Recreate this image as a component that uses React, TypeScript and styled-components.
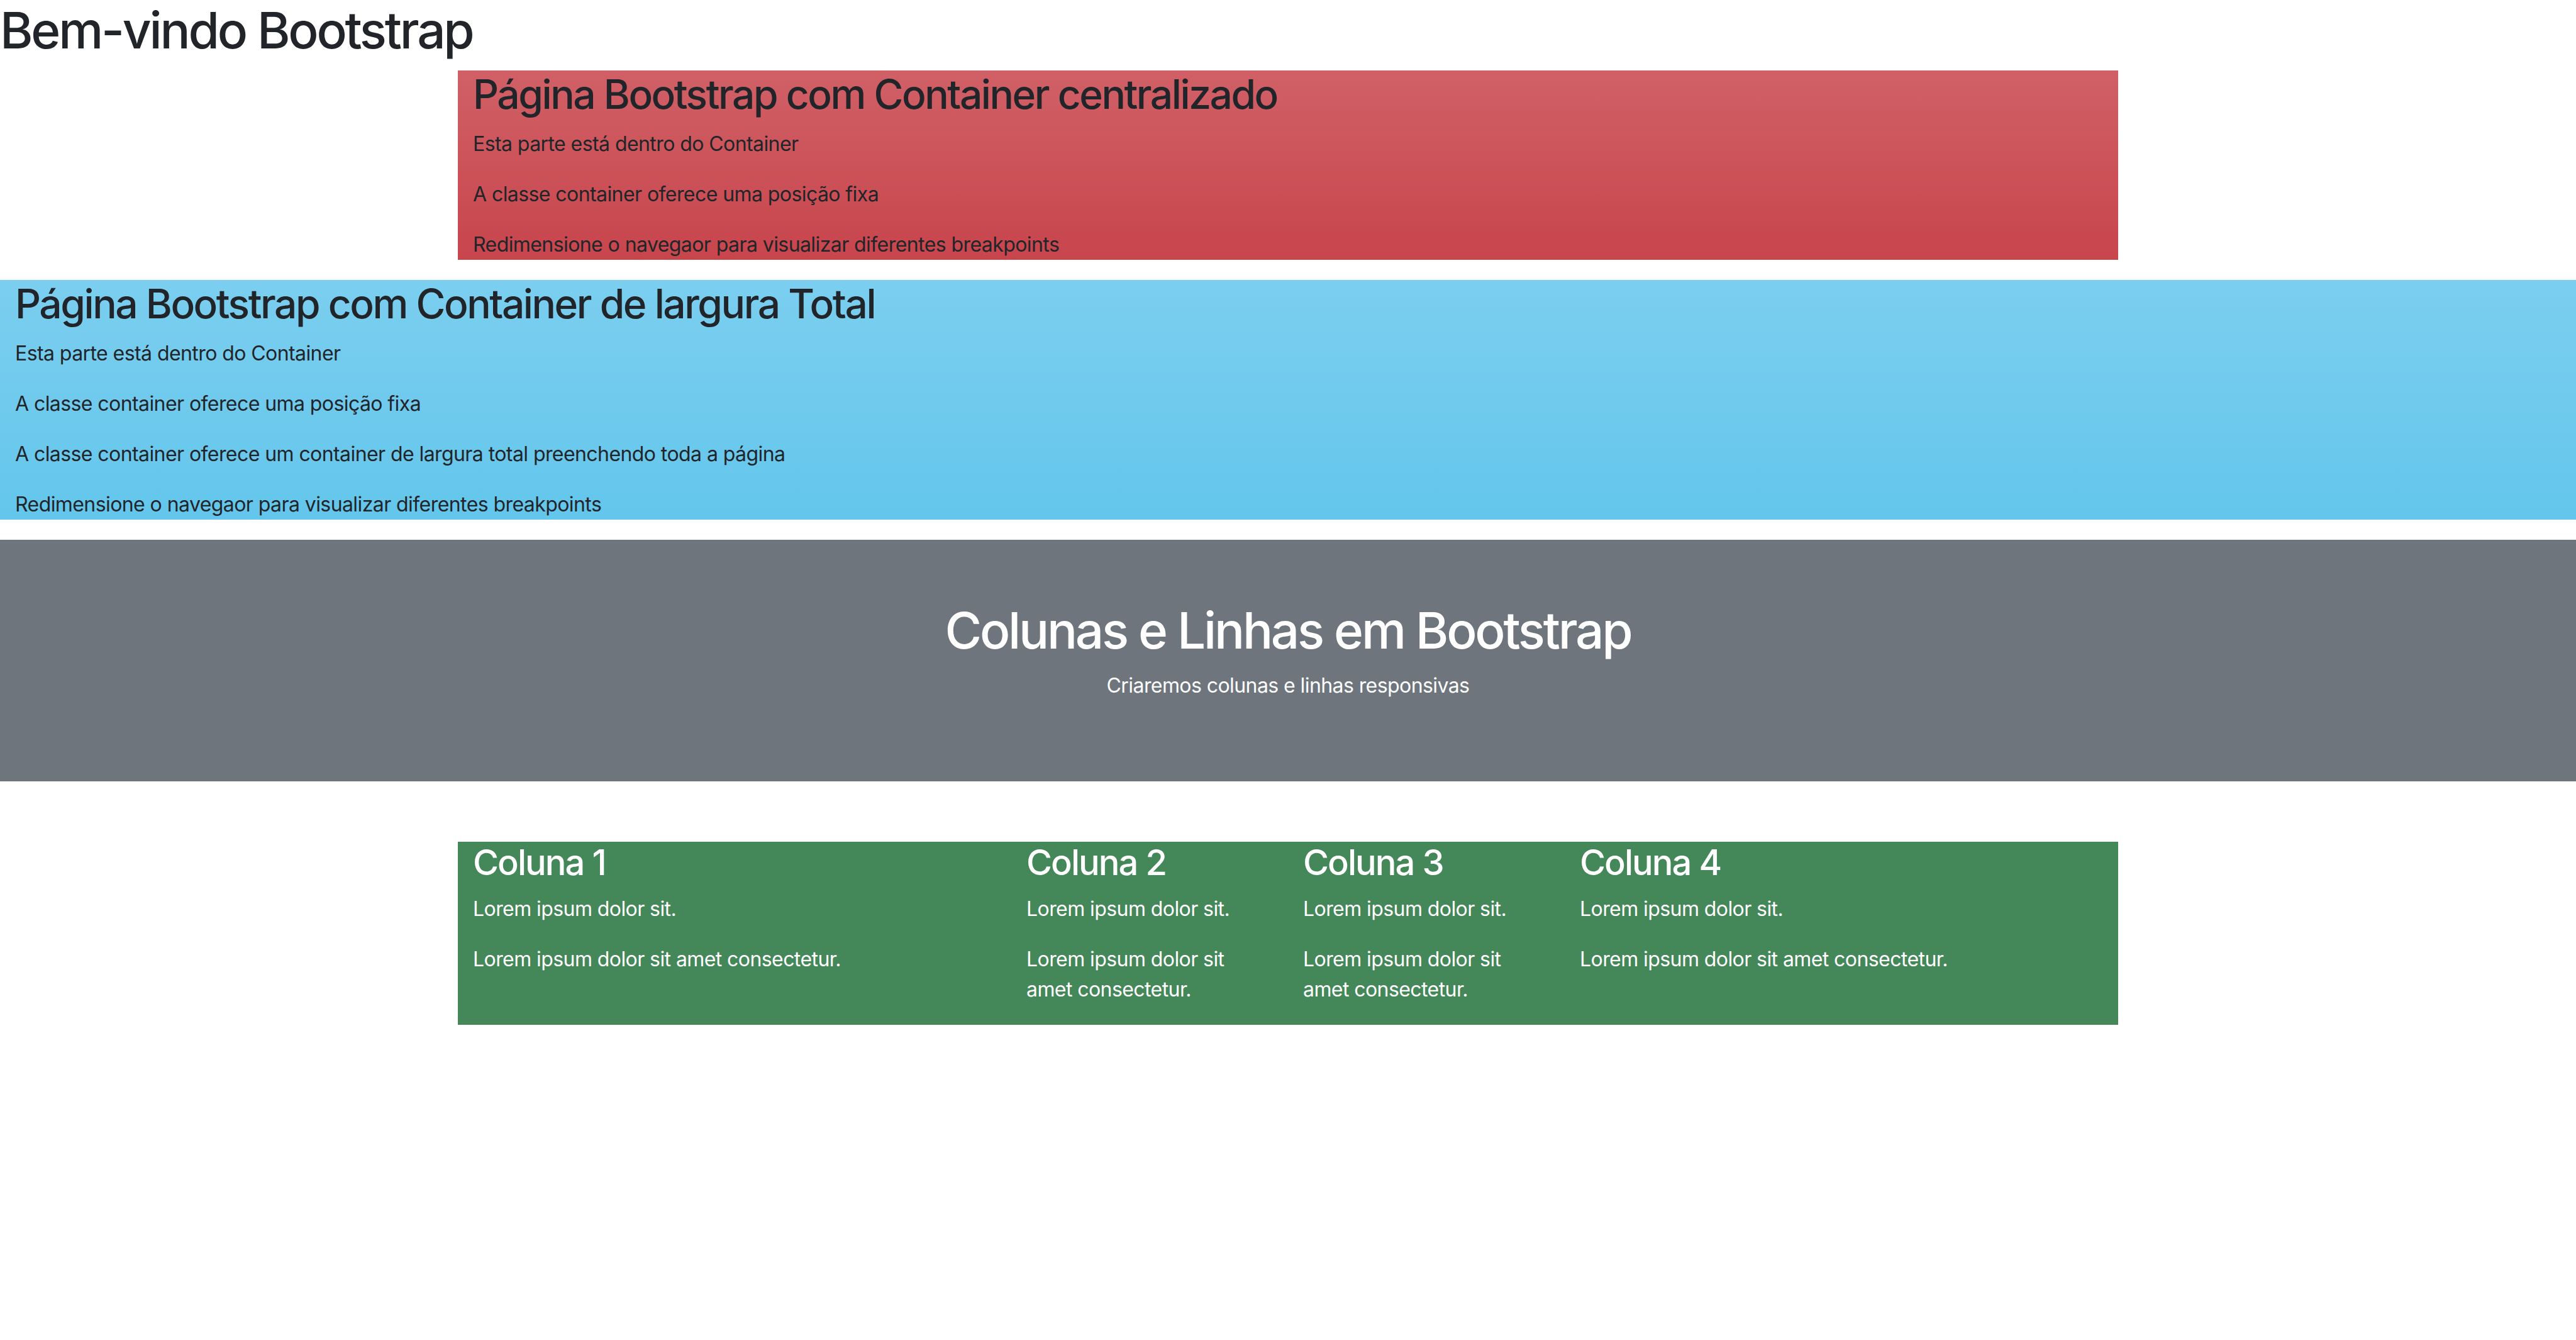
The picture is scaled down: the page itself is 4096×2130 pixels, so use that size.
import React from "react";
import styled, { createGlobalStyle } from "styled-components";

const GlobalStyle = createGlobalStyle`
  *, *::before, *::after {
    box-sizing: border-box;
  }
  body {
    margin: 0;
    background: #fff;
    color: #212529;
    font-family: Inter, "Noto Sans", sans-serif;
    font-size: 32px;
    font-weight: 400;
    line-height: 1.5;
    letter-spacing: -0.018em;
  }
`;

const gradient = `linear-gradient(180deg, rgba(255,255,255,.15), rgba(255,255,255,0))`;

const Title = styled.h1<{ $light?: boolean }>`
  margin: 0 0 16px;
  font-size: 80px;
  font-weight: 500;
  line-height: 1.2;
  letter-spacing: -0.04em;
  color: ${(p) => (p.$light ? "#fff" : "#212529")};
`;

const Subtitle = styled.h2`
  margin: 0 0 16px;
  font-size: 64px;
  font-weight: 500;
  line-height: 1.2;
  letter-spacing: -0.038em;
`;

const ColTitle = styled.h3`
  margin: 0 0 16px;
  font-size: 56px;
  font-weight: 500;
  line-height: 1.2;
  letter-spacing: -0.035em;
`;

const Text = styled.p`
  margin: 0 0 32px;
`;

const Container = styled.div<{ $fluid?: boolean; $bg: string; $gradient?: boolean }>`
  width: 100%;
  max-width: ${(p) => (p.$fluid ? "none" : "2640px")};
  margin: 0 auto;
  padding: 0 24px;
  background-color: ${(p) => p.$bg};
  background-image: ${(p) => (p.$gradient ? gradient : "none")};
`;

const Banner = styled.section`
  margin: 0 0 96px;
  padding: 96px;
  background: #6e757d;
  color: #fff;
  text-align: center;
`;

const Row = styled.div`
  display: grid;
  grid-template-columns: 4fr 2fr 2fr 4fr;
  margin: 0 -24px;
  color: #fff;
`;

const Col = styled.div`
  min-width: 0;
  padding: 0 24px;
`;

const columns = ["Coluna 1", "Coluna 2", "Coluna 3", "Coluna 4"];

export default function App() {
  return (
    <>
      <GlobalStyle />
      <Title>Bem-vindo Bootstrap</Title>

      <Container $bg="#c8454c" $gradient>
        <Subtitle>Página Bootstrap com Container centralizado</Subtitle>
        <Text>Esta parte está dentro do Container</Text>
        <Text>A classe container oferece uma posição fixa</Text>
        <Text>Redimensione o navegaor para visualizar diferentes breakpoints</Text>
      </Container>

      <Container $fluid $bg="#64c6ec" $gradient>
        <Subtitle>Página Bootstrap com Container de largura Total</Subtitle>
        <Text>Esta parte está dentro do Container</Text>
        <Text>A classe container oferece uma posição fixa</Text>
        <Text>A classe container oferece um container de largura total preenchendo toda a página</Text>
        <Text>Redimensione o navegaor para visualizar diferentes breakpoints</Text>
      </Container>

      <Banner>
        <Title $light>Colunas e Linhas em Bootstrap</Title>
        <Text>Criaremos colunas e linhas responsivas</Text>
      </Banner>

      <Container $bg="#448759">
        <Row>
          {columns.map((c) => (
            <Col key={c}>
              <ColTitle>{c}</ColTitle>
              <Text>Lorem ipsum dolor sit.</Text>
              <Text>Lorem ipsum dolor sit amet consectetur.</Text>
            </Col>
          ))}
        </Row>
      </Container>
    </>
  );
}
